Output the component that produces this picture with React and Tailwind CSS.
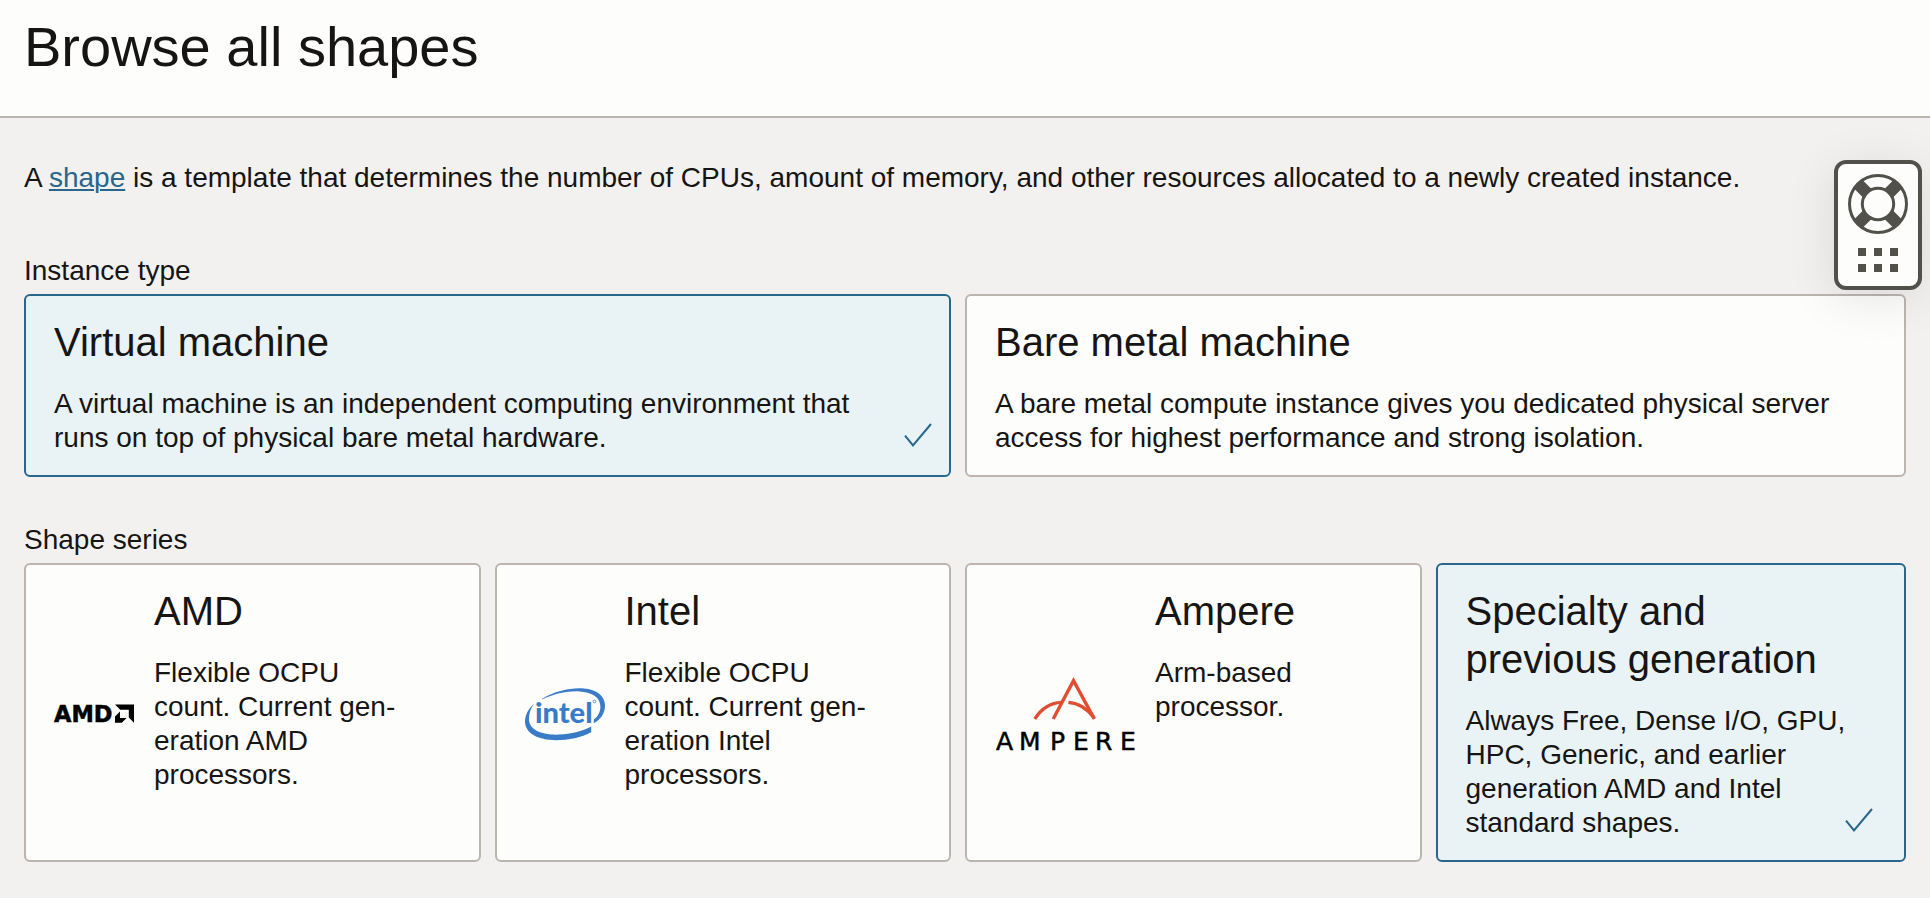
import { useState } from "react";

const INSTANCE_TYPES = [
  {
    id: "vm",
    title: "Virtual machine",
    text: "A virtual machine is an independent computing environment that runs on top of physical bare metal hardware.",
  },
  {
    id: "bm",
    title: "Bare metal machine",
    text: "A bare metal compute instance gives you dedicated physical server access for highest performance and strong isolation.",
  },
];

const SERIES = [
  {
    id: "amd",
    title: "AMD",
    logo: AmdLogo,
    text: "Flexible OCPU count. Current gen\u00aderation AMD processors.",
  },
  {
    id: "intel",
    title: "Intel",
    logo: IntelLogo,
    text: "Flexible OCPU count. Current gen\u00aderation Intel processors.",
  },
  { id: "ampere", title: "Ampere", logo: AmpereLogo, text: "Arm-based processor." },
  {
    id: "specialty",
    title: "Specialty and previous generation",
    text: "Always Free, Dense I/O, GPU, HPC, Generic, and earlier generation AMD and Intel standard shapes.",
  },
];

function AmdLogo() {
  return (
    <svg
      className="w-20 shrink-0 overflow-visible"
      viewBox="0 0 80 20"
      aria-label="AMD logo"
      role="img"
    >
      <text
        x="0"
        y="18"
        fontFamily="'DejaVu Sans', sans-serif"
        fontWeight="700"
        fontSize="22.5"
        fill="#000"
        stroke="#000"
        strokeWidth="0.5"
      >
        AMD
      </text>
      <path d="M61 0.5H80V18.7L74.8 13.5V5.7H66.2Z" fill="#000" />
      <path d="M66 7.5V14H72.6L67.8 18.7H61V12.4Z" fill="#000" />
    </svg>
  );
}

function IntelLogo() {
  return (
    <svg className="w-20 shrink-0" viewBox="0 0 80 54" aria-label="Intel logo" role="img">
      <path
        d="M17.2 11.8C30 3.8 46 .4 59 1.4C71.5 2.4 80 8.8 80 18.4C80 26.2 75.6 32.4 68.8 36.2V32.4C73 29.4 75.6 24.6 75.4 19.2C75.2 9.6 66 5 54.6 4.4C42.6 3.8 29 6.6 17.2 12.6Z"
        fill="#3a7bc8"
      />
      <path
        d="M8.8 17C3 22 0 28.4 0 34.8C0.4 46.6 13 53 31 53.2C43.6 53.2 56.6 50.4 66.2 45.2V39.6C57 44.4 46 47.2 34 47.6C17.6 48 5.2 43.8 4 33.2C3.6 27.6 5.4 21.8 8.8 17Z"
        fill="#3a7bc8"
      />
      <text x="10" y="35.5" fontFamily="Lato, sans-serif" fontWeight="900" fontSize="29" fill="#3a7bc8">
        intel
      </text>
      <circle cx="69.5" cy="14.5" r="1.4" fill="none" stroke="#3a7bc8" strokeWidth="0.7" />
    </svg>
  );
}

function AmpereLogo() {
  return (
    <svg
      className="w-[140px] shrink-0 overflow-visible"
      viewBox="0 0 140 74"
      aria-label="Ampere logo"
      role="img"
    >
      <g fill="none" stroke="#e04e32" strokeWidth="3.4" strokeLinejoin="miter">
        <path d="M58.2 42L78.5 3.6L99.4 42" />
        <path d="M39.8 42C45.5 33 54 25.8 66.5 25.4" />
        <path d="M73.4 25.4C85 26.2 92.5 32.2 99.2 41" />
      </g>
      <text
        x="1 24 55 78 100 125"
        y="72.5"
        fontFamily="'DejaVu Sans', sans-serif"
        fontSize="25"
        fill="#000"
        stroke="#000"
        strokeWidth="0.5"
      >
        AMPERE
      </text>
    </svg>
  );
}

function CheckMark({ inset }) {
  return (
    <svg
      className={`absolute bottom-7 h-6 w-7 ${inset ? "right-[31px]" : "right-[17px]"}`}
      viewBox="0 0 28 24"
      fill="none"
      stroke="#28668c"
      strokeWidth="2"
      aria-hidden="true"
    >
      <path d="M1 12.6L9 22.4L27 1" />
    </svg>
  );
}

function OptionCard({ option, group, checked, last, onSelect }) {
  const Logo = option.logo;
  return (
    <label
      className={`relative flex cursor-pointer items-stretch rounded-md border-2 pb-5 pl-7 pt-[22px] has-focus-visible:outline-2 ${
        last ? "pr-12" : "mr-3.5 pr-16"
      } ${checked ? "border-[#28668c] bg-[#e9f2f5]" : "border-[#bbb5b0] bg-[#fdfdfc]"}`}
    >
      <input
        type="radio"
        name={group}
        value={option.id}
        checked={checked}
        onChange={() => onSelect(option.id)}
        className="sr-only"
      />
      {Logo && (
        <span className="mr-5 flex shrink-0 items-center">
          <Logo />
        </span>
      )}
      <span className="flex min-w-0 flex-col gap-[21px]">
        <span className="text-[40px] leading-[48px]">{option.title}</span>
        <span className="text-[28px] leading-[34px]">{option.text}</span>
      </span>
      {checked && <CheckMark inset={last && group === "series"} />}
    </label>
  );
}

function OptionGroup({ label, group, options, value, onSelect, columns, className }) {
  return (
    <section className={className} role="radiogroup" aria-labelledby={`${group}-label`}>
      <h2 id={`${group}-label`} className="mb-1.5 text-[28px] leading-[34px]">
        {label}
      </h2>
      <div className={`grid ${columns}`}>
        {options.map((option, i) => (
          <OptionCard
            key={option.id}
            option={option}
            group={group}
            checked={option.id === value}
            last={i === options.length - 1}
            onSelect={onSelect}
          />
        ))}
      </div>
    </section>
  );
}

function HelpWidget() {
  return (
    <button
      type="button"
      aria-label="Help"
      className="fixed right-2 top-40 flex w-[88px] flex-col items-center gap-3.5 rounded-xl border-4 border-[#51504b] bg-[#fdfdfc] pb-3.5 pt-2.5 shadow-[0_8px_48px_rgba(0,0,0,0.1)]"
    >
      <svg className="size-[60px]" viewBox="0 0 60 60" fill="none" stroke="#51504b" aria-hidden="true">
        <circle cx="30" cy="30" r="28.5" strokeWidth="3" />
        <circle cx="30" cy="30" r="15.7" strokeWidth="3" />
        <path
          d="M19 19L10.5 10.5M41 19L49.5 10.5M19 41L10.5 49.5M41 41L49.5 49.5"
          strokeWidth="12"
        />
      </svg>
      <svg className="h-6 w-10" viewBox="0 0 40 24" fill="#51504b" aria-hidden="true">
        <path d="M0 0h8v8H0zM16 0h8v8h-8zM32 0h8v8h-8zM0 16h8v8H0zM16 16h8v8h-8zM32 16h8v8h-8z" />
      </svg>
    </button>
  );
}

export default function App() {
  const [type, setType] = useState("vm");
  const [series, setSeries] = useState("specialty");

  return (
    <div className="min-h-screen bg-[#f3f1f0] font-['Liberation_Sans',Arial,sans-serif] text-[#161513]">
      <header className="border-b-2 border-[#bbb5b0] bg-[#fdfdfc] px-6 pb-[35px] pt-[13px]">
        <h1 className="text-[56px] leading-[68px]">Browse all shapes</h1>
      </header>
      <main className="px-6 pb-8 pt-[43px]">
        <p className="text-[28px] leading-[34px]">
          A{" "}
          <a href="#shape" className="text-[#28668c] underline decoration-2 underline-offset-2">
            shape
          </a>{" "}
          is a template that determines the number of CPUs, amount of memory, and other resources
          allocated to a newly created instance.
        </p>
        <OptionGroup
          className="mt-[59px]"
          label="Instance type"
          group="type"
          options={INSTANCE_TYPES}
          value={type}
          onSelect={setType}
          columns="grid-cols-2"
        />
        <OptionGroup
          className="mt-[46px]"
          label="Shape series"
          group="series"
          options={SERIES}
          value={series}
          onSelect={setSeries}
          columns="grid-cols-4"
        />
      </main>
      <HelpWidget />
    </div>
  );
}
